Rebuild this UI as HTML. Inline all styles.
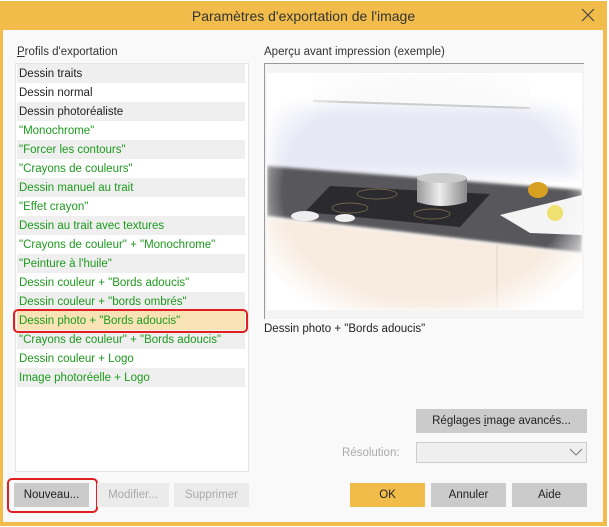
<!DOCTYPE html>
<html><head><meta charset="utf-8"><style>
*{box-sizing:border-box;margin:0;padding:0}
body{width:609px;height:527px;background:#fff;font-family:"Liberation Sans",sans-serif;font-size:11.5px;color:#222;position:relative;overflow:hidden}
.win{position:absolute;left:0;top:1px;width:607px;height:525px;background:#f2bc4a}
.inner{position:absolute;left:3px;top:30px;width:600px;height:492px;background:#f9f9f9}
.title{position:absolute;left:0;top:1px;width:607px;height:29px;text-align:center;line-height:31px;font-size:14px;color:#333}
.abs{position:absolute}
.list{position:absolute;left:15px;top:63px;width:234px;height:409px;background:#fff;border:1px solid #e4e4e4}
.row{position:absolute;left:1px;width:228px;height:19px;line-height:20px;padding-left:2px;color:#1d9a1d}
.g{background:#efefef}
.k{color:#222}
.btn{position:absolute;height:24px;line-height:25px;text-align:center;background:#cbcbcb;font-size:11.5px;color:#222}
.dis{background:#ebebeb;color:#aaa}
</style></head><body>
<div class="win"></div>
<div class="title">Paramètres d'exportation de l'image</div>
<svg class="abs" style="left:581px;top:8px" width="14" height="14"><path d="M1 1L13 13M13 1L1 13" stroke="#444" stroke-width="1.2"/></svg>
<div class="inner"></div>
<div class="abs" style="left:17px;top:46px;color:#333"><u>P</u>rofils d'exportation</div>
<div class="abs" style="left:264px;top:46px;color:#333">Aperçu avant impression (exemple)</div>
<div class="list">
<div class="row g k" style="top:0">Dessin traits</div>
<div class="row k" style="top:19px">Dessin normal</div>
<div class="row g k" style="top:38px">Dessin photoréaliste</div>
<div class="row" style="top:57px">"Monochrome"</div>
<div class="row g" style="top:76px">"Forcer les contours"</div>
<div class="row" style="top:95px">"Crayons de couleurs"</div>
<div class="row g" style="top:114px">Dessin manuel au trait</div>
<div class="row" style="top:133px">"Effet crayon"</div>
<div class="row g" style="top:152px">Dessin au trait avec textures</div>
<div class="row" style="top:171px">"Crayons de couleur" + "Monochrome"</div>
<div class="row g" style="top:190px">"Peinture à l'huile"</div>
<div class="row" style="top:209px">Dessin couleur + "Bords adoucis"</div>
<div class="row g" style="top:228px">Dessin couleur + "bords ombrés"</div>
<div class="row" style="top:247px;background:#f7e3b6">Dessin photo + "Bords adoucis"</div>
<div class="row g" style="top:266px">"Crayons de couleur" + "Bords adoucis"</div>
<div class="row" style="top:285px">Dessin couleur + Logo</div>
<div class="row g" style="top:304px">Image photoréelle + Logo</div>
</div>
<div class="abs" style="left:13px;top:309px;width:235px;height:24px;border:2px solid #e02020;border-radius:5px"></div>
<div class="abs" style="left:264px;top:63px;width:320px;height:256px;border-top:1px solid #999;border-left:1px solid #999;background:#f4f4f4"></div>
<svg class="abs" style="left:267px;top:73px" width="315" height="237" viewBox="267 73 315 237">
<defs>
<filter id="b"><feGaussianBlur stdDeviation="1.5"/></filter>
<filter id="b2"><feGaussianBlur stdDeviation="8"/></filter>
<radialGradient id="rg" cx="50%" cy="50%" r="60%"><stop offset="0" stop-color="#fff" stop-opacity="0"/><stop offset=".75" stop-color="#fff" stop-opacity="0"/><stop offset="1" stop-color="#fff" stop-opacity="1"/></radialGradient>
<linearGradient id="pot" x1="0" x2="1"><stop offset="0" stop-color="#999"/><stop offset=".45" stop-color="#eee"/><stop offset="1" stop-color="#888"/></linearGradient>
</defs>
<rect x="267" y="73" width="315" height="237" fill="#fff"/>
<rect x="270" y="105" width="312" height="70" fill="#e6e8f6" filter="url(#b2)"/>
<polygon points="313,74 530,74 530,108 313,101" fill="#fafafa"/>
<line x1="313" y1="101" x2="530" y2="108" stroke="#ccc" stroke-width="2"/>
<polygon points="267,166 582,190 582,253 267,216" fill="#58585c" filter="url(#b)"/>
<polygon points="330,186 490,194 460,227 305,212" fill="#2a2a2f"/>
<ellipse cx="377" cy="194" rx="20" ry="5" fill="none" stroke="#8a7a50" stroke-width=".7"/>
<ellipse cx="350" cy="208" rx="18" ry="5" fill="none" stroke="#8a7a50" stroke-width=".7"/>
<ellipse cx="432" cy="214" rx="18" ry="5" fill="none" stroke="#8a7a50" stroke-width=".7"/>
<path d="M417 178h50v24q-25 8-50 0z" fill="url(#pot)"/>
<ellipse cx="442" cy="178" rx="25" ry="5" fill="#ccc"/>
<polygon points="500,215 582,195 582,235 530,233" fill="#f4f4f4"/>
<ellipse cx="538" cy="190" rx="10" ry="8" fill="#d8a020"/>
<ellipse cx="555" cy="213" rx="8" ry="8" fill="#f0e070"/>
<polygon points="267,218 582,254 582,310 267,310" fill="#f8ebdf" filter="url(#b)"/>
<line x1="497" y1="245" x2="497" y2="310" stroke="#e0d4c8"/>
<ellipse cx="305" cy="216" rx="14" ry="5" fill="#eee"/>
<ellipse cx="345" cy="218" rx="10" ry="4" fill="#eee"/>
<rect x="267" y="73" width="315" height="237" fill="url(#rg)"/>
</svg>
<div class="abs" style="left:264px;top:323px;color:#222">Dessin photo + "Bords adoucis"</div>
<div class="btn" style="left:416px;top:409px;width:171px">Réglages <u>i</u>mage avancés...</div>
<div class="abs" style="left:342px;top:447px;color:#aaa">Résolution:</div>
<div class="abs" style="left:416px;top:442px;width:171px;height:21px;border:1px solid #ccc;background:#efefef"></div>
<svg class="abs" style="left:569px;top:447px" width="14" height="10"><path d="M1 2L7 8L13 2" stroke="#777" fill="none"/></svg>
<div class="btn" style="left:14px;top:483px;width:75px">Nouveau...</div>
<div class="abs" style="left:7px;top:478px;width:91px;height:35px;border:2px solid #e02020;border-radius:5px"></div>
<div class="btn dis" style="left:97px;top:483px;width:72px">Modifier...</div>
<div class="btn dis" style="left:174px;top:483px;width:75px">Supprimer</div>
<div class="btn" style="left:350px;top:483px;width:75px;background:#f2bc4a">OK</div>
<div class="btn" style="left:431px;top:483px;width:75px">Annuler</div>
<div class="btn" style="left:512px;top:483px;width:75px">Aide</div>
</body></html>
